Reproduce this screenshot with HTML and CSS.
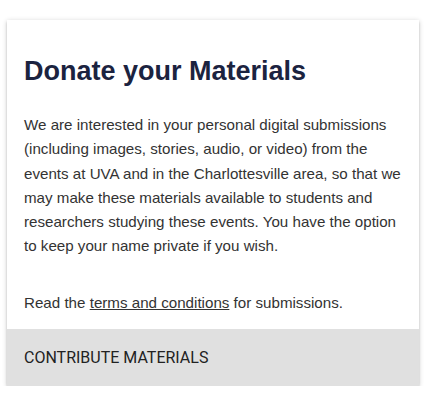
FILE: index.html
```html
<!DOCTYPE html>
<html>
<head>
<meta charset="utf-8">
<link rel="stylesheet" href="styles.css">
</head>
<body>
<div class="card">
  <div class="card-body">
    <h2 class="title">Donate your Materials</h2>
    <p class="text">We are interested in your personal digital submissions (including images, stories, audio, or video) from the events at UVA and in the Charlottesville area, so that we may make these materials available to students and researchers studying these events. You have the option to keep your name private if you wish.</p>
    <p class="text terms">Read the <a href="#">terms and conditions</a> for submissions.</p>
  </div>
  <div class="card-action">CONTRIBUTE MATERIALS</div>
</div>
</body>
</html>
```

FILE: styles.css
```css
html, body {
  margin: 0;
  padding: 0;
  background: #fff;
}
body {
  padding: 20px 9px 0 7px;
}
.card {
  width: 412px;
  background: #fff;
  box-shadow: 0 2px 2px 0 rgba(0,0,0,0.14), 0 3px 1px -2px rgba(0,0,0,0.12), 0 1px 5px 0 rgba(0,0,0,0.2);
}
.card-body {
  padding: 33px 13px 14px 17px;
}
.title {
  margin: 0 0 24px 0;
  font-family: "Liberation Sans", Arial, sans-serif;
  font-weight: bold;
  font-size: 27px;
  line-height: 36px;
  color: #1b2340;
}
.text {
  margin: 0;
  font-family: "Liberation Sans", Arial, sans-serif;
  font-size: 15.15px;
  line-height: 24.3px;
  color: #333;
}
.terms {
  margin-top: 32px;
}
.terms a {
  color: #333;
  text-decoration: underline;
}
.card-action {
  height: 57px;
  background: #e0e0e0;
  padding: 0 17px;
  display: flex;
  align-items: center;
  font-family: Roboto, sans-serif;
  font-size: 16px;
  color: #222;
}
```
